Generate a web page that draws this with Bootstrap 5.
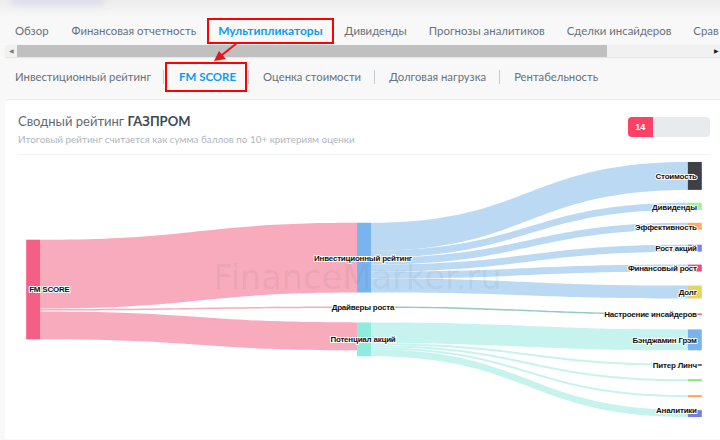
<!DOCTYPE html>
<html lang="ru">
<head>
  <meta charset="UTF-8">
  <title>FM Score</title>
  <link href="https://cdn.jsdelivr.net/npm/bootstrap@5.3.0/dist/css/bootstrap.min.css" rel="stylesheet">
  <style>
    html, body { height: 440px; overflow: hidden; }
    body { background: #f8f8f9; font-family: Lato, "Open Sans", sans-serif; color: #67727c; position: relative; }
    .top-strip { height: 18px; background: linear-gradient(#ececec, #f8f8f9); position: relative; overflow: hidden; }
    .top-strip::before { content: ""; position: absolute; left: 12px; top: -3px; width: 92px; height: 8px; background: #dcdcec; filter: blur(3px); }
    .tabs-row { height: 26px; padding-left: 4px; flex-wrap: nowrap; overflow: hidden; white-space: nowrap; font-size: 11.4px; }
    .tabs-row .nav-link { padding: 0 11px; line-height: 26px; color: #67727c; }
    .tabs-row .nav-item:first-child .nav-link { padding-right: 12px; }
    .sub-row { height: 30px; margin-top: 5px; padding-left: 4px; flex-wrap: nowrap; white-space: nowrap; font-size: 11.3px; }
    .sub-row .nav-link { padding: 0 11px; line-height: 30px; color: #67727c; }
    .tabs-row .nav-link.active, .sub-row .nav-link.active { color: #0d9bf2; font-weight: 700; font-size: 12px; outline: 2px solid #f00; outline-offset: -2px; }
    .sub-row .nav-link.active { padding: 0 11px 0 14px; font-size: 11.45px; }
    .sub-sep { width: 1px; height: 14px; background: #c5ccd2; margin: 0 3px 0 2px; }
    .sub-sep.before-active { margin: 0 1px; }
    .sub-sep.after-active { margin-left: 1px; }
    .scroll-bar { height: 12px; margin: 1px 0 0 5px; background: #f1f1f1; box-shadow: 0 1px 1px #e6e6e6; }
    .scroll-btn { width: 12px; flex: none; font-size: 6px; line-height: 12px; text-align: center; color: #7a7a7a; }
    .scroll-btn.end { margin-left: auto; color: #222; width: 8px; }
    .scroll-thumb { width: 590px; background: #c0c0c0; }
    .score-card { margin: 7px 0 0 5px; height: 340px; border: 0; border-top: 1px solid #e9ebed; border-radius: 4px 0 0 0; }
    .score-head { margin: 0 10px 0 13px; padding: 11px 0 8px; height: 55px; border-bottom: 1px solid #f1f2f4; }
    .score-title { font-size: 13px; line-height: 20px; color: #5f6a74; margin: 0; font-weight: 400; }
    .score-title b { color: #3d4a56; font-weight: 700; }
    .score-note { font-size: 9.9px; line-height: 16px; color: #b0b7bd; margin: 0; }
    .score-bar { width: 82px; height: 20px; margin-top: 6px; background: #e8ebee; border-radius: 4px; }
    .score-bar .progress-bar { background: #ff4168; font: 700 9px "Liberation Sans", sans-serif; color: #fff; }
    .sankey { display: block; }
    .sankey text { font: 700 8px "Liberation Sans", sans-serif; letter-spacing: -.2px; fill: #111; stroke: #fff; stroke-width: 2px; paint-order: stroke; stroke-linejoin: round; }
    .sankey text.mark { font: 400 33.8px "DejaVu Sans", sans-serif; letter-spacing: 0; fill: #3c4650; fill-opacity: .08; stroke: none; }
    .annot { position: absolute; left: 0; top: 0; pointer-events: none; }
  </style>
</head>
<body>
  <div class="top-strip"></div>
  <ul class="nav tabs-row">
    <li class="nav-item"><a class="nav-link" href="#">Обзор</a></li>
    <li class="nav-item"><a class="nav-link" href="#">Финансовая отчетность</a></li>
    <li class="nav-item"><a class="nav-link active" href="#">Мультипликаторы</a></li>
    <li class="nav-item"><a class="nav-link" href="#">Дивиденды</a></li>
    <li class="nav-item"><a class="nav-link" href="#">Прогнозы аналитиков</a></li>
    <li class="nav-item"><a class="nav-link" href="#">Сделки инсайдеров</a></li>
    <li class="nav-item"><a class="nav-link" href="#">Срав</a></li>
  </ul>
  <div class="scroll-bar d-flex">
    <div class="scroll-btn">◀</div>
    <div class="scroll-thumb"></div>
    <div class="scroll-btn end">▶</div>
  </div>
  <ul class="nav sub-row align-items-center">
    <li class="nav-item"><a class="nav-link" href="#">Инвестиционный рейтинг</a></li>
    <li class="sub-sep before-active"></li>
    <li class="nav-item"><a class="nav-link active" href="#">FM SCORE</a></li>
    <li class="sub-sep after-active"></li>
    <li class="nav-item"><a class="nav-link" href="#">Оценка стоимости</a></li>
    <li class="sub-sep"></li>
    <li class="nav-item"><a class="nav-link" href="#">Долговая нагрузка</a></li>
    <li class="sub-sep"></li>
    <li class="nav-item"><a class="nav-link" href="#">Рентабельность</a></li>
  </ul>

  <div class="card score-card">
    <div class="score-head d-flex justify-content-between">
      <div>
        <h5 class="score-title">Сводный рейтинг <b>ГАЗПРОМ</b></h5>
        <p class="score-note">Итоговый рейтинг считается как сумма баллов по 10+ критериям оценки</p>
      </div>
      <div class="progress score-bar">
        <div class="progress-bar" style="width: 30%">14</div>
      </div>
    </div>
    <svg class="sankey" id="sankey" width="715" height="285" viewBox="5 155 715 285"></svg>
  </div>

  <svg class="annot" width="720" height="100" viewBox="0 0 720 100">
    <path d="M237 43 L222 55" stroke="#e8141c" stroke-width="2" fill="none"/>
    <path d="M214 61 L219 51 L226 59 Z" fill="#e8141c"/>
  </svg>

  <script>
    const svg = document.getElementById('sankey');
    const pink = '#f8abbd', blue = '#bcd9f4', teal = '#c6f3ee', thin = '#8fc9c5';
    // x0, y0 top, y0 bottom, x1, y1 top, y1 bottom, colour
    const links = [
      [39, 240, 309, 357, 223, 293, pink],
      [39, 309.5, 311, 357, 307, 308.5, pink],
      [39, 312, 340, 357, 323, 351, pink],
      [370, 223, 251, 689, 162, 190, blue],
      [370, 251, 258, 689, 203, 210, blue],
      [370, 258, 265, 689, 223, 230, blue],
      [370, 265, 272, 689, 245, 252, blue],
      [370, 272, 279, 689, 265, 272, blue],
      [370, 279, 293, 689, 286, 299, blue],
      [370, 307, 308.5, 689, 314, 315.5, thin],
      [370, 323, 344, 689, 330, 351, teal],
      [370, 344, 346, 689, 364.5, 366.5, teal],
      [370, 346, 348, 689, 380, 382, teal],
      [370, 348, 350, 689, 396, 398, teal],
      [370, 350, 357, 689, 411, 418, teal]
    ];
    // x, top, bottom, colour
    const nodes = [
      [25, 240, 340, '#f55f85'],
      [357, 223, 293, '#7ab4ee'],
      [357, 307, 308.5, '#7ab4ee'],
      [357, 323, 357, '#90ebdf'],
      [689, 162, 190, '#3f3f46'],
      [689, 203, 210, '#a4f292'],
      [689, 223, 230, '#ffab68'],
      [689, 245, 252, '#8080e8'],
      [689, 265, 272, '#e8507a'],
      [689, 286, 299, '#e4d560'],
      [689, 314, 315.5, '#ff5a5a'],
      [689, 330, 351, '#7ab4ee'],
      [689, 365, 366.5, '#3f3f46'],
      [689, 380, 382, '#84ea74'],
      [689, 396, 398, '#ffa35c'],
      [689, 411, 418, '#7b7be2']
    ];
    // text, anchor x, baseline y, anchor
    const labels = [
      ['FM SCORE', 28, 292, 'start'],
      ['Инвестиционный рейтинг', 363, 261, 'middle'],
      ['Драйверы роста', 363, 311, 'middle'],
      ['Потенциал акций', 363, 343, 'middle'],
      ['Стоимость', 698, 179, 'end'],
      ['Дивиденды', 698, 210, 'end'],
      ['Эффективность', 698, 230, 'end'],
      ['Рост акций', 698, 251, 'end'],
      ['Финансовый рост', 698, 271, 'end'],
      ['Долг', 698, 296, 'end'],
      ['Настроение инсайдеров', 698, 318, 'end'],
      ['Бэнджамин Грэм', 698, 344, 'end'],
      ['Питер Линч', 698, 369, 'end'],
      ['Аналитики', 698, 414, 'end']
    ];
    let html = '';
    for (const [x0, a0, b0, x1, a1, b1, c] of links) {
      const m = (x0 + x1) / 2;
      html += `<path fill="${c}" d="M${x0} ${a0}C${m} ${a0} ${m} ${a1} ${x1} ${a1}L${x1} ${b1}C${m} ${b1} ${m} ${b0} ${x0} ${b0}Z"/>`;
    }
    for (const [x, t, b, c] of nodes) {
      html += `<rect x="${x}" y="${t}" width="14" height="${b - t}" fill="${c}"/>`;
    }
    html += '<text class="mark" x="213" y="289">FinanceMarker.ru</text>';
    for (const [t, x, y, a] of labels) {
      html += `<text x="${x}" y="${y}" text-anchor="${a}">${t}</text>`;
    }
    svg.innerHTML = html;
  </script>
  <script src="https://cdn.jsdelivr.net/npm/bootstrap@5.3.0/dist/js/bootstrap.bundle.min.js"></script>
</body>
</html>
